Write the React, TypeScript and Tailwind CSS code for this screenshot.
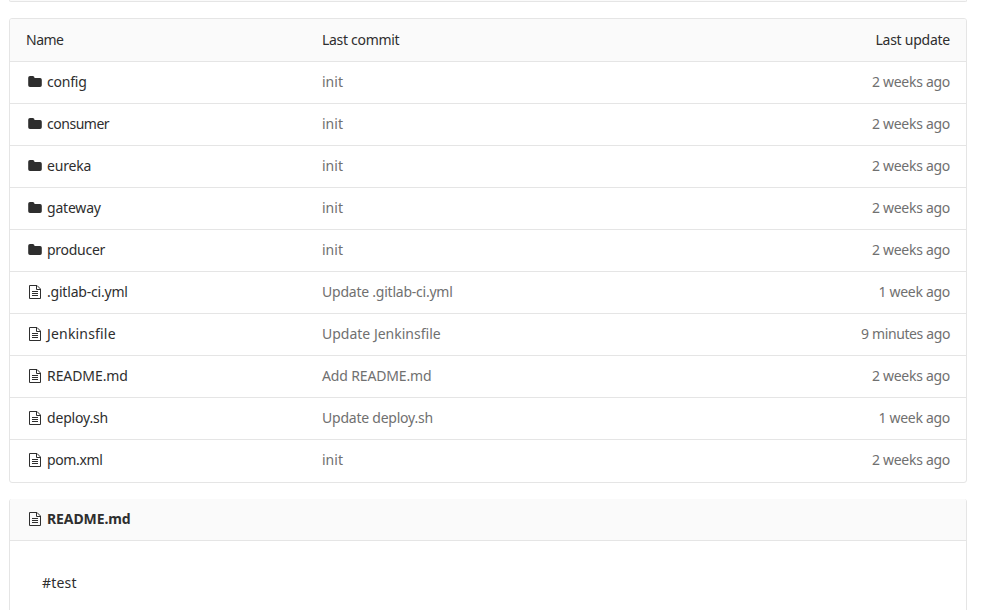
type Entry = { name: string; commit: string; updated: string; folder?: boolean; track: string; commitTrack?: string };

const entries: Entry[] = [
  { name: 'config', commit: 'init', updated: '2 weeks ago', folder: true, track: 'tracking-[-0.2px]' },
  { name: 'consumer', commit: 'init', updated: '2 weeks ago', folder: true, track: 'tracking-[-0.48px]' },
  { name: 'eureka', commit: 'init', updated: '2 weeks ago', folder: true, track: 'tracking-[-0.2px]' },
  { name: 'gateway', commit: 'init', updated: '2 weeks ago', folder: true, track: 'tracking-[-0.2px]' },
  { name: 'producer', commit: 'init', updated: '2 weeks ago', folder: true, track: 'tracking-[-0.28px]' },
  { name: '.gitlab-ci.yml', commit: 'Update .gitlab-ci.yml', updated: '1 week ago', track: 'tracking-[-0.2px]', commitTrack: 'tracking-[-0.23px]' },
  { name: 'Jenkinsfile', commit: 'Update Jenkinsfile', updated: '9 minutes ago', track: 'tracking-[0.18px]' },
  { name: 'README.md', commit: 'Add README.md', updated: '2 weeks ago', track: 'tracking-[-0.08px]', commitTrack: 'tracking-[-0.15px]' },
  { name: 'deploy.sh', commit: 'Update deploy.sh', updated: '1 week ago', track: 'tracking-[-0.18px]', commitTrack: 'tracking-[-0.23px]' },
  { name: 'pom.xml', commit: 'init', updated: '2 weeks ago', track: 'tracking-[-0.38px]' },
];

function FolderIcon() {
  return (
    <svg className="h-3.5 w-3.5 shrink-0" viewBox="0 0 14 14" fill="currentColor">
      <path d="M2 1h2.7q1.8 0 1.8 1.8v.2h5.6q1.7 0 1.7 1.8v5.4q0 1.8-1.7 1.8h-10.1q-1.8 0-1.8-1.8v-7.4q0-1.8 1.8-1.8z" />
    </svg>
  );
}

function FileIcon() {
  return (
    <svg className="h-3.5 w-3.5 shrink-0" viewBox="0 0 14 14" fill="none" stroke="currentColor">
      <path d="M1.5 .5h7.5l3.5 3.5v9.5h-11zM8.5 .5v4h4M4 6.5h6M4 8.5h6M4 10.5h6" />
    </svg>
  );
}

export default function App() {
  return (
    <main className="h-[610px] w-[1000px] overflow-hidden bg-white pl-[9px] font-['Noto_Sans',sans-serif] text-[14px] leading-5 text-[#2e2e2e]">
      <div className="h-0.5 w-[958px] rounded-b-[3px] border border-t-0 border-[#e5e5e5] bg-[#fafafa]" />

      <section className="mt-4 w-[958px] overflow-hidden rounded-[3px] border border-[#e5e5e5]">
        <div className="flex h-[43px] items-center border-b border-[#e5e5e5] bg-[#fafafa] px-4">
          <span className="w-[296px] tracking-[-0.5px]">Name</span>
          <span className="flex-1 tracking-[-0.3px]">Last commit</span>
          <span className="tracking-[-0.25px]">Last update</span>
        </div>
        {entries.map((e) => (
          <div key={e.name} className="flex h-[42px] items-start border-b border-[#e5e5e5] px-4 pt-2.5 last:border-b-0">
            <div className="flex w-[296px] items-center pl-0.5">
              {e.folder ? <FolderIcon /> : <FileIcon />}
              <span className={`ml-[5px] ${e.track}`}>{e.name}</span>
            </div>
            <span className={`flex-1 text-[#707070] ${e.commitTrack ?? ''}`}>{e.commit}</span>
            <span className={`text-[#707070] ${e.updated === '9 minutes ago' ? 'tracking-[-0.38px]' : 'tracking-[-0.29px]'}`}>{e.updated}</span>
          </div>
        ))}
      </section>

      <section className="mt-4 h-[111px] w-[958px] overflow-hidden rounded-t-[3px] border-x border-[#e5e5e5]">
        <div className="flex h-[42px] items-center border-b border-[#e5e5e5] bg-[#fafafa] pb-px pl-[18px]">
          <FileIcon />
          <span className="ml-[5px] font-bold tracking-[-0.1px]">README.md</span>
        </div>
        <p className="px-8 pt-8 tracking-[0.2px]">#test</p>
      </section>
    </main>
  );
}
